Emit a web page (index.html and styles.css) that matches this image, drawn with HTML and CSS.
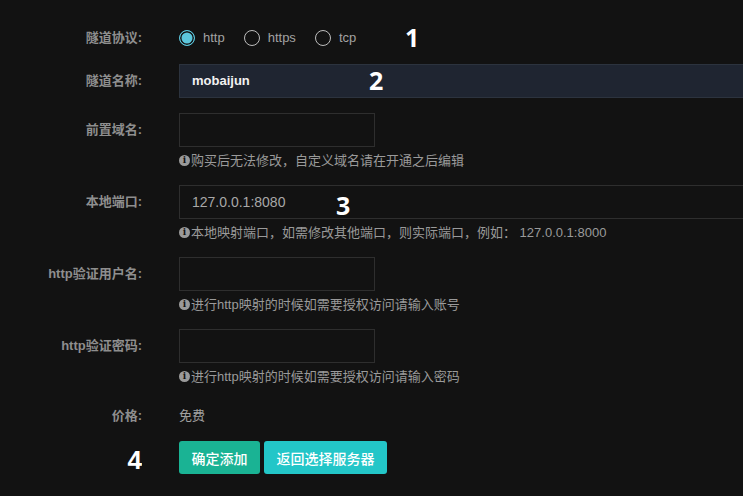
FILE: index.html
```html
<!DOCTYPE html>
<html lang="zh">
<head>
<meta charset="utf-8">
<link rel="stylesheet" href="styles.css">
</head>
<body>
<form class="form">
  <div class="row row-radio">
    <label class="label">隧道协议:</label>
    <div class="control radios">
      <label class="radio"><input type="radio" name="p" checked><span>http</span></label>
      <label class="radio"><input type="radio" name="p"><span>https</span></label>
      <label class="radio"><input type="radio" name="p"><span>tcp</span></label>
      <span class="mark mark-1">1</span>
    </div>
  </div>
  <div class="row">
    <label class="label">隧道名称:</label>
    <div class="control">
      <div class="input input-long input-filled">mobaijun</div>
      <span class="mark mark-2">2</span>
    </div>
  </div>
  <div class="row">
    <label class="label">前置域名:</label>
    <div class="control">
      <div class="input input-short"></div>
      <p class="help"><span class="info">i</span>购买后无法修改，自定义域名请在开通之后编辑</p>
    </div>
  </div>
  <div class="row">
    <label class="label">本地端口:</label>
    <div class="control">
      <div class="input input-long input-port">127.0.0.1:8080</div>
      <span class="mark mark-3">3</span>
      <p class="help"><span class="info">i</span>本地映射端口，如需修改其他端口，则实际端口，例如： 127.0.0.1:8000</p>
    </div>
  </div>
  <div class="row">
    <label class="label">http验证用户名:</label>
    <div class="control">
      <div class="input input-short"></div>
      <p class="help"><span class="info">i</span>进行http映射的时候如需要授权访问请输入账号</p>
    </div>
  </div>
  <div class="row">
    <label class="label">http验证密码:</label>
    <div class="control">
      <div class="input input-short"></div>
      <p class="help"><span class="info">i</span>进行http映射的时候如需要授权访问请输入密码</p>
    </div>
  </div>
  <div class="row row-price">
    <label class="label">价格:</label>
    <div class="control price">免费</div>
  </div>
  <div class="row row-buttons">
    <div class="label label-num">4</div>
    <div class="control buttons">
      <button type="button" class="btn btn-primary">确定添加</button>
      <button type="button" class="btn btn-info">返回选择服务器</button>
    </div>
  </div>
</form>
</body>
</html>
```
FILE: styles.css
```css
html {
  overflow: hidden;
}
body {
  margin: 0;
  background: #121212;
  font-family: "Liberation Sans", "Noto Sans CJK SC", sans-serif;
  color: #9a9a9a;
  font-size: 13px;
}
.form {
  padding-top: 21px;
}
.row {
  display: flex;
  align-items: flex-start;
  margin-bottom: 15px;
}
.row-radio {
  margin-bottom: 9px;
}
.label {
  width: 142px;
  flex: none;
  text-align: right;
  font-weight: bold;
  color: #8e8e8e;
  line-height: 34px;
  height: 34px;
  margin-right: 37px;
  overflow: hidden;
}
.control {
  position: relative;
  flex: 1;
  min-width: 0;
}
.radios {
  display: flex;
  align-items: center;
  height: 34px;
}
.radio {
  display: flex;
  align-items: center;
  margin-right: 19px;
  color: #a2a2a2;
  line-height: 16px;
}
.radio input {
  appearance: none;
  -webkit-appearance: none;
  margin: 0 8px 0 0;
  width: 16px;
  height: 16px;
  border: 1.5px solid #bdbdbd;
  border-radius: 50%;
  background: transparent;
  box-sizing: border-box;
}
.radio input:checked {
  border-color: #5cc7dd;
  background: #5cc7dd;
  box-shadow: inset 0 0 0 1.5px #121212;
}
.input {
  box-sizing: border-box;
  height: 34px;
  border: 1px solid #2e2e2e;
  padding: 0 12px;
  line-height: 32px;
  font-size: 14px;
  color: #aaa;
}
.input-short {
  width: 196px;
}
.input-long {
  width: 620px;
}
.input-filled {
  background: #1f2531;
  border-color: #2c333e;
  color: #f2f2f2;
  font-weight: bold;
  font-size: 13px;
}
.input-port {
  color: #a8a8a8;
}
.help {
  margin: 4px 0 0;
  height: 19px;
  line-height: 19px;
  font-size: 13px;
  color: #9a9a9a;
  display: flex;
  align-items: center;
  overflow: hidden;
}
.info {
  width: 11px;
  height: 11px;
  flex: none;
  border-radius: 50%;
  background: #9a9a9a;
  color: #121212;
  font-family: "DejaVu Serif", serif;
  font-weight: bold;
  font-size: 9px;
  line-height: 11px;
  text-align: center;
  margin-right: 1px;
}
.row-price {
  margin-bottom: 10px;
}
.row-price .label,
.price {
  line-height: 30px;
  height: 30px;
}
.price {
  color: #a0a0a0;
}
.label-num {
  font-family: "Liberation Sans", sans-serif;
  font-size: 26px;
  color: #fff;
  height: 34px;
  line-height: 39px;
}
.buttons {
  display: flex;
  gap: 4px;
}
.btn {
  height: 33px;
  border: none;
  border-radius: 3px;
  padding: 0 12.5px;
  font-family: "Liberation Sans", "Noto Sans CJK SC", sans-serif;
  font-size: 14px;
  font-weight: 500;
  color: #fff;
}
.btn-primary {
  background: #1ab394;
}
.btn-info {
  background: #23c6c8;
}
.mark {
  position: absolute;
  font-family: "Open Sans", sans-serif;
  font-weight: bold;
  font-size: 25px;
  color: #fff;
  line-height: 1;
}
.mark-1 {
  left: 226px;
  top: 4px;
}
.mark-2 {
  left: 190px;
  top: 4px;
}
.mark-3 {
  left: 157px;
  top: 8px;
}
```
